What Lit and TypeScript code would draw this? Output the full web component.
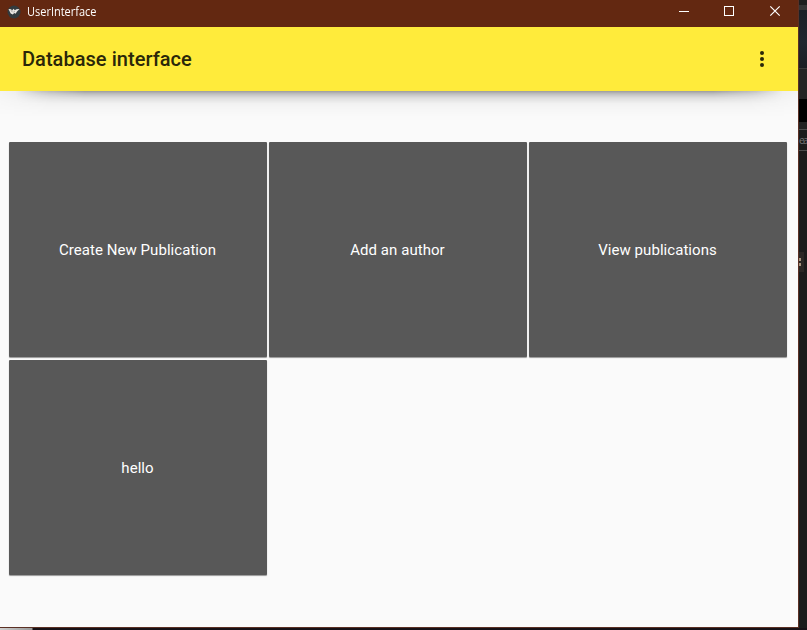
import { LitElement, html, css } from "lit";
import { customElement } from "lit/decorators.js";

@customElement("app-root")
export class AppRoot extends LitElement {
  static styles = css`
    :host {
      display: grid;
      grid-template-columns: 799px 8px;
      grid-template-rows: 628px 2px;
      width: 807px;
      height: 630px;
      overflow: hidden;
      background: #1b1b1b;
      font-family: Roboto, sans-serif;
    }
    .window {
      box-sizing: border-box;
      display: flex;
      flex-direction: column;
      border-right: 1px solid #5b3024;
      border-bottom: 1px solid #5b3024;
      background: #fafafa;
    }
    .titlebar {
      flex: 0 0 27px;
      display: flex;
      align-items: flex-start;
      background: #632811;
      color: #fff;
    }
    .logo {
      margin: 5px 6px 0 7px;
      width: 14px;
      height: 14px;
    }
    .caption {
      flex: 1;
      font: 12px/24px "Open Sans", "Noto Sans", sans-serif;
    }
    .caption span {
      display: inline-block;
      transform-origin: left;
      transform: scaleX(0.915);
    }
    .controls {
      display: flex;
      width: 137px;
      height: 24px;
    }
    .toolbar {
      position: relative;
      flex: 0 0 64px;
      display: flex;
      align-items: center;
      justify-content: space-between;
      box-sizing: border-box;
      padding: 0 34px 0 22px;
      background: #ffeb3b;
      color: #2a2709;
    }
    .heading {
      font-size: 20px;
      font-weight: 500;
      line-height: 24px;
      letter-spacing: 0.04px;
    }
    .shadow {
      position: absolute;
      left: 0;
      top: 64px;
      width: 798px;
      height: 26px;
    }
    .shadow::before,
    .shadow::after {
      content: "";
      position: absolute;
      inset: 0;
    }
    .shadow::before {
      background: linear-gradient(rgba(0, 0, 0, 0.09), rgba(0, 0, 0, 0.04) 40%, rgba(0, 0, 0, 0.01) 75%, transparent);
      mask-image: linear-gradient(90deg, rgba(0, 0, 0, 0.3), #000 50px, #000 748px, rgba(0, 0, 0, 0.3));
    }
    .shadow::after {
      background: linear-gradient(rgba(0, 0, 0, 0.31), rgba(0, 0, 0, 0.16) 3px, rgba(0, 0, 0, 0.06) 7px, transparent 13px);
      mask-image: linear-gradient(90deg, transparent 15px, rgba(0, 0, 0, 0.5) 42px, #000 85px, #000 713px, rgba(0, 0, 0, 0.5) 756px, transparent 783px);
    }
    .grid {
      display: grid;
      grid-template-columns: repeat(3, 258px);
      grid-auto-rows: 215px;
      gap: 3px 2px;
      padding: 51px 9px 0;
    }
    .card {
      display: flex;
      align-items: center;
      justify-content: center;
      box-sizing: border-box;
      padding-right: 1px;
      border-radius: 1px;
      background: #585858;
      box-shadow: 0 1px 1px rgba(0, 0, 0, 0.4);
      color: #fff;
      font-size: 15px;
      line-height: 20px;
      letter-spacing: 0.05px;
    }
    .behind {
      display: flex;
      flex-direction: column;
      overflow: hidden;
    }
    .tabs {
      height: 5px;
      background: #1e1e1e;
    }
    .strip {
      height: 5px;
      background: #353535;
    }
    .panel {
      height: 58px;
      background: linear-gradient(#1b2026, #20262e 55%, #1b1e23);
      border-bottom: 1px solid #3a3a3a;
    }
    .bar {
      height: 30px;
      background: #242424;
    }
    .black {
      height: 23px;
      background: #000;
    }
    .gap {
      height: 7px;
      background: #222;
    }
    .search {
      height: 20px;
      border-top: 1px solid #4c4c4c;
      border-bottom: 1px solid #4c4c4c;
      background: #1c1c1c;
      color: #777;
      font: 10px/20px "Open Sans", sans-serif;
      letter-spacing: -1.6px;
      white-space: nowrap;
    }
    .badge {
      width: 5px;
      height: 20px;
      margin-top: 101px;
      background: #2b2725;
    }
    .badge svg {
      display: block;
    }
    .below {
      grid-column: 1 / 3;
      display: flex;
      background: #171116;
    }
    .scroll {
      width: 32px;
      background: linear-gradient(90deg, #d0d0d0, #999);
      border-right: 1px solid #555;
    }
  `;

  private cards = ["Create New Publication", "Add an author", "View publications", "hello"];

  render() {
    return html`
      <div class="window">
        <div class="titlebar">
          <svg class="logo" viewBox="0 0 14 14">
            <circle cx="7" cy="7" r="6.5" fill="#333a3d" />
            <path d="M1.5 4 L4 4.2 L5.2 5.5 L6.5 3.8 L7.8 5.2 L9.5 4.2 L12.5 4 L10 6.5 L8.6 8.8 L7.2 8 L5.8 9.6 L3.7 8.5 Z" fill="#eee9e4" />
            <path d="M4 5.2 L5.4 7.2 M7.5 6 L6.8 7.5" stroke="#777" stroke-width=".6" />
          </svg>
          <div class="caption"><span>UserInterface</span></div>
          <svg class="controls" viewBox="0 0 137 24" fill="none" stroke="#fff">
            <path d="M18 11.5H28" />
            <rect x="63.5" y="6.5" width="9" height="9" />
            <path d="M109.3 6.3L118.7 15.7M118.7 6.3L109.3 15.7" stroke-width="1.2" />
          </svg>
        </div>
        <div class="toolbar">
          <div class="heading">Database interface</div>
          <svg width="4" height="16" viewBox="0 0 4 16" fill="#2a2709">
            <circle cx="2" cy="2" r="2" />
            <circle cx="2" cy="8" r="2" />
            <circle cx="2" cy="14" r="2" />
          </svg>
          <div class="shadow"></div>
        </div>
        <div class="grid">${this.cards.map((label) => html`<div class="card">${label}</div>`)}</div>
      </div>
      <div class="behind">
        <div class="tabs"></div>
        <div class="strip"></div>
        <div class="panel"></div>
        <div class="bar"></div>
        <div class="black"></div>
        <div class="gap"></div>
        <div class="search">ea</div>
        <div class="badge">
          <svg width="5" height="20" viewBox="0 0 5 20" fill="#a8947f">
            <path d="M0 6H2V9H0ZM0 11H2V14H0Z" />
          </svg>
        </div>
      </div>
      <div class="below"><div class="scroll"></div></div>
    `;
  }
}
